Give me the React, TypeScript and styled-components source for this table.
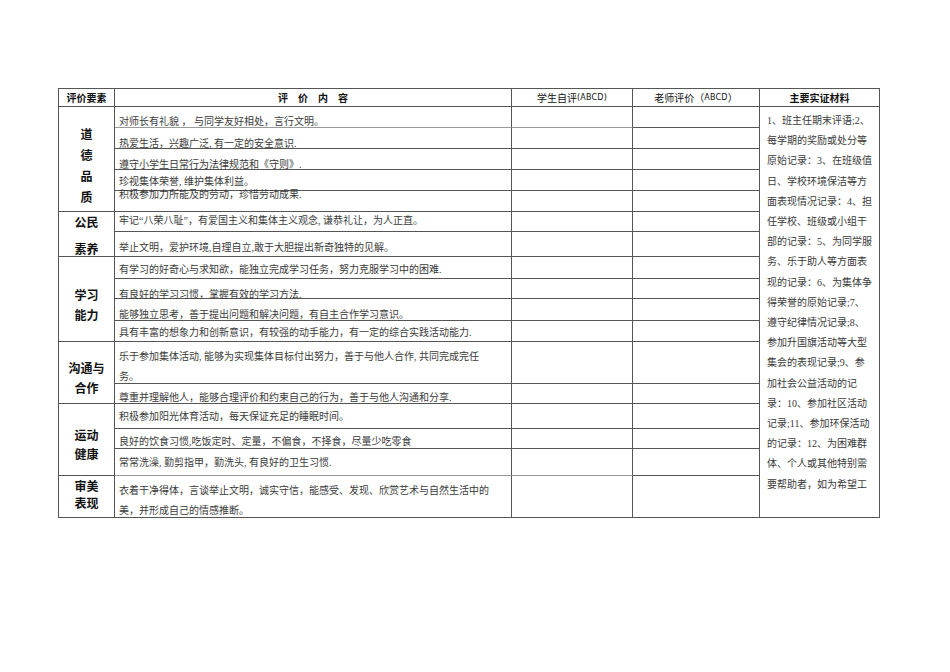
import styled, { createGlobalStyle } from 'styled-components';

const GlobalStyle = createGlobalStyle`
  body {
    margin: 0;
    background: #fff;
  }
`;

const Sheet = styled.div`
  padding: 88px 0 0 58px;
  font-family: "Liberation Serif", "Noto Sans CJK SC", serif;
`;

const Table = styled.div<{ $rows: string }>`
  display: grid;
  grid-template-columns: 56px 397px 121px 127px 120px;
  grid-template-rows: ${({ $rows }) => $rows};
  width: max-content;
  border-top: 1px solid #555;
  border-left: 1px solid #555;
`;

const Cell = styled.div<{ $row: number; $col: number; $span?: number; $soft?: boolean }>`
  box-sizing: border-box;
  min-width: 0;
  grid-column: ${({ $col }) => $col};
  grid-row: ${({ $row, $span }) => `${$row} / span ${$span ?? 1}`};
  border-right: 1px solid #555;
  border-bottom: 1px solid ${({ $soft }) => ($soft ? '#9a9a9a' : '#555')};
`;

const HeadCell = styled(Cell)<{ $bold?: boolean; $spread?: boolean }>`
  display: flex;
  align-items: center;
  justify-content: center;
  font-family: "Noto Sans CJK SC", "DejaVu Sans", sans-serif;
  font-size: 10px;
  font-weight: ${({ $bold }) => ($bold ? 700 : 400)};
  letter-spacing: ${({ $spread }) => ($spread ? '10px' : '0')};
  padding-left: ${({ $spread }) => ($spread ? '10px' : '0')};
  color: #111;
`;

const Abcd = styled.span`
  font-family: "DejaVu Sans", sans-serif;
  font-size: 8px;
  letter-spacing: 0.2px;
`;

const CategoryCell = styled(Cell)`
  display: flex;
  flex-direction: column;
  align-items: center;
`;

const CategoryLabel = styled.div<{ $top: number; $lh: number }>`
  margin-top: ${({ $top }) => $top}px;
  font-family: "Noto Sans CJK SC", sans-serif;
  font-size: 12px;
  font-weight: 700;
  line-height: ${({ $lh }) => $lh}px;
  color: #111;
  text-align: center;
`;

const ContentCell = styled(Cell)`
  padding: 0 4px;
`;

const ContentText = styled.div<{ $top: number }>`
  margin-top: ${({ $top }) => $top}px;
  font-size: 10px;
  line-height: 20px;
  color: #3a3a3a;
  white-space: nowrap;
`;

const MarkCell = styled(Cell)``;

const EvidenceCell = styled(Cell)`
  padding: 4px 0 0 7px;
  font-size: 10px;
  line-height: 20.2px;
  color: #3a3a3a;
  white-space: nowrap;
`;

interface Row {
  h: number;
  top: number;
  lines: string[];
  soft?: boolean;
}

interface Section {
  label: string[];
  labelTop: number;
  labelLh: number;
  rows: Row[];
}

const sections: Section[] = [
  {
    label: ['道', '德', '品', '质'],
    labelTop: 16,
    labelLh: 21,
    rows: [
      { h: 21, top: 5, lines: ['对师长有礼貌 ， 与同学友好相处，言行文明。'], soft: true },
      { h: 21, top: 6, lines: ['热爱生活，兴趣广泛, 有一定的安全意识.'] },
      { h: 21, top: 6, lines: ['遵守小学生日常行为法律规范和《守则》.'] },
      { h: 21, top: 2, lines: ['珍视集体荣誉, 维护集体利益。'] },
      { h: 21, top: -6, lines: ['积极参加力所能及的劳动，珍惜劳动成果.'] },
    ],
  },
  {
    label: ['公民', '素养'],
    labelTop: -4,
    labelLh: 27,
    rows: [
      { h: 20, top: -1, lines: ['牢记“八荣八耻”，有爱国主义和集体主义观念, 谦恭礼让，为人正直。'] },
      { h: 25, top: 6, lines: ['举止文明，爱护环境,自理自立,敢于大胆提出新奇独特的见解。'] },
    ],
  },
  {
    label: ['学习', '能力'],
    labelTop: 28,
    labelLh: 20,
    rows: [
      { h: 22, top: 3, lines: ['有学习的好奇心与求知欲，能独立完成学习任务，努力克服学习中的困难.'] },
      { h: 20, top: 6, lines: ['有良好的学习习惯，掌握有效的学习方法.'] },
      { h: 22, top: 6, lines: ['能够独立思考，善于提出问题和解决问题，有自主合作学习意识。'] },
      { h: 21, top: 2, lines: ['具有丰富的想象力和创新意识，有较强的动手能力，有一定的综合实践活动能力.'] },
    ],
  },
  {
    label: ['沟通与', '合作'],
    labelTop: 16,
    labelLh: 20,
    rows: [
      {
        h: 42,
        top: 5,
        lines: ['乐于参加集体活动, 能够为实现集体目标付出努力，善于与他人合作, 共同完成完任', '务。'],
      },
      { h: 20, top: 4, lines: ['尊重并理解他人，能够合理评价和约束自己的行为，善于与他人沟通和分享.'] },
    ],
  },
  {
    label: ['运动', '健康'],
    labelTop: 21,
    labelLh: 19,
    rows: [
      { h: 25, top: 3, lines: ['积极参加阳光体育活动，每天保证充足的睡眠时间。'] },
      { h: 20, top: 3, lines: ['良好的饮食习惯,吃饭定时、定量，不偏食，不择食，尽量少吃零食'] },
      { h: 27, top: 4, lines: ['常常洗澡, 勤剪指甲，勤洗头, 有良好的卫生习惯.'], soft: true },
    ],
  },
  {
    label: ['审美', '表现'],
    labelTop: 1,
    labelLh: 17,
    rows: [
      {
        h: 42,
        top: 5,
        lines: ['衣着干净得体，言谈举止文明，诚实守信，能感受、发现、欣赏艺术与自然生活中的', '美，并形成自己的情感推断。'],
      },
    ],
  },
];

const evidence = [
  '1、班主任期末评语;2、',
  '每学期的奖励或处分等',
  '原始记录：3、在班级值',
  '日、学校环境保洁等方',
  '面表现情况记录：4、担',
  '任学校、班级或小组干',
  '部的记录：5、为同学服',
  '务、乐于助人等方面表',
  '现的记录：6、为集体争',
  '得荣誉的原始记录;7、',
  '遵守纪律情况记录;8、',
  '参加升国旗活动等大型',
  '集会的表现记录;9、参',
  '加社会公益活动的记',
  '录：10、参加社区活动',
  '记录;11、参加环保活动',
  '的记录：12、为困难群',
  '体、个人或其他特别需',
  '要帮助者，如为希望工',
];

export default function App() {
  const allRows = sections.flatMap((s) => s.rows);
  const template = ['18px', ...allRows.map((r) => `${r.h}px`)].join(' ');

  let rowIndex = 2;
  const body = sections.map((section, si) => {
    const start = rowIndex;
    rowIndex += section.rows.length;
    return [
      <CategoryCell key={`c${si}`} $col={1} $row={start} $span={section.rows.length}>
        <CategoryLabel $top={section.labelTop} $lh={section.labelLh}>
          {section.label.map((l) => (
            <div key={l}>{l}</div>
          ))}
        </CategoryLabel>
      </CategoryCell>,
      ...section.rows.flatMap((row, ri) => {
        const r = start + ri;
        return [
          <ContentCell key={`t${si}-${ri}`} $col={2} $row={r} $soft={row.soft}>
            <ContentText $top={row.top}>
              {row.lines.map((line) => (
                <div key={line}>{line}</div>
              ))}
            </ContentText>
          </ContentCell>,
          <MarkCell key={`s${si}-${ri}`} $col={3} $row={r} $soft={row.soft} />,
          <MarkCell key={`m${si}-${ri}`} $col={4} $row={r} />,
        ];
      }),
    ];
  });

  return (
    <>
      <GlobalStyle />
      <Sheet>
        <Table $rows={template}>
          <HeadCell $col={1} $row={1} $bold>评价要素</HeadCell>
          <HeadCell $col={2} $row={1} $bold $spread>评价内容</HeadCell>
          <HeadCell $col={3} $row={1}>
            学生自评<Abcd>(ABCD)</Abcd>
          </HeadCell>
          <HeadCell $col={4} $row={1}>
            老师评价（<Abcd>ABCD</Abcd>）
          </HeadCell>
          <HeadCell $col={5} $row={1} $bold>主要实证材料</HeadCell>
          {body}
          <EvidenceCell $col={5} $row={2} $span={allRows.length}>
            {evidence.map((line) => (
              <div key={line}>{line}</div>
            ))}
          </EvidenceCell>
        </Table>
      </Sheet>
    </>
  );
}
